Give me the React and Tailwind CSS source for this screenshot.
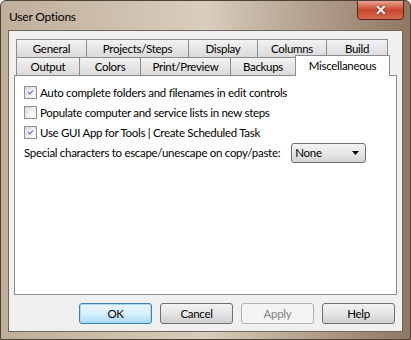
import { Check } from "lucide-react";

const row1 = [
  { label: "General", w: 71 },
  { label: "Projects/Steps", w: 103 },
  { label: "Display", w: 70 },
  { label: "Columns", w: 70 },
  { label: "Build", w: 62 },
];

const row2 = [
  { label: "Output", w: 64 },
  { label: "Colors", w: 62 },
  { label: "Print/Preview", w: 91 },
  { label: "Backups", w: 66 },
];

const options = [
  { label: "Auto complete folders and filenames in edit controls", checked: true },
  { label: "Populate computer and service lists in new steps", checked: false },
  { label: "Use GUI App for Tools | Create Scheduled Task", checked: true },
];

function Tab({ label, w }) {
  return (
    <div
      className="h-[18px] flex items-center justify-center border border-b-0 border-[#898c95] -ml-px first:ml-0 bg-gradient-to-b from-[#f2f2f2] to-[#dadada]"
      style={{ width: w }}
    >
      {label}
    </div>
  );
}

function CheckBox({ checked }) {
  return (
    <div className="w-[13px] h-[13px] border border-[#8e8f8f] bg-gradient-to-br from-[#dcdcdc] to-[#fbfbfb] p-[2px] shrink-0">
      <div className="w-full h-full bg-gradient-to-br from-[#e6e6e6] to-[#ffffff] flex items-center justify-center">
        {checked && <Check size={11} strokeWidth={3.5} className="text-[#3f5ea8]" />}
      </div>
    </div>
  );
}

function Btn({ label, primary, disabled }) {
  let cls = "border-[#707070] bg-gradient-to-b from-[#f2f2f2] via-[#e6e6e6] to-[#cfcfcf] text-black";
  if (primary) cls = "border-[#3c7fb1] bg-gradient-to-b from-[#eaf6fd] via-[#d9f0fc] to-[#a7d9f5] text-black shadow-[inset_0_0_0_1px_#a9dcf7]";
  if (disabled) cls = "border-[#adb2b5] bg-[#f4f4f4] text-[#838383]";
  return (
    <div className={"w-[73px] h-[21px] rounded-[3px] border flex items-center justify-center " + cls}>
      {label}
    </div>
  );
}

export default function App() {
  return (
    <div
      className="w-[411px] h-[340px] overflow-hidden flex flex-col px-[7px] pb-[7px] bg-gradient-to-r from-[#bfae9a] via-[#d9cdbd] to-[#8f7762] rounded-t-[6px] border border-[#4e4339] text-[11.5px] tracking-[-0.3px] text-black"
      style={{ fontFamily: "Lato, 'Noto Sans', sans-serif" }}
    >
      {/* title bar */}
      <div className="h-[29px] flex items-start justify-between shrink-0">
        <div className="pt-[7px] pl-[1px] text-[12px] tracking-[-0.2px]">User Options</div>
        <div className="w-[47px] h-[20px] -mt-px mr-[-1px] rounded-b-[4px] border border-[#5c2318] bg-gradient-to-b from-[#e8a291] via-[#c9462c] to-[#d66a4f] flex items-center justify-center">
          <span className="text-white font-bold text-[14px] leading-none [text-shadow:0_0_2px_#3a1208]">✕</span>
        </div>
      </div>

      {/* client area */}
      <div className="flex-1 bg-[#f0f0f0] border border-[#6f6558] flex flex-col px-[5px] pt-[8px]">
        {/* tabs */}
        <div className="flex pl-[2px]">
          {row1.map((t) => (
            <Tab key={t.label} {...t} />
          ))}
        </div>
        <div className="flex pl-[2px] h-[18px] items-end">
          {row2.map((t) => (
            <Tab key={t.label} {...t} />
          ))}
          <div className="w-[95px] h-[21px] shrink-0 -ml-px -mb-px flex items-start justify-center pt-[1px] bg-white border border-b-0 border-[#898c95] relative z-10">
            Miscellaneous
          </div>
        </div>

        {/* panel */}
        <div className="h-[220px] bg-white border border-[#898c95] flex flex-col pl-[9px] pt-[10px] gap-[7px]">
          {options.map((o) => (
            <div key={o.label} className="h-[13px] flex items-center gap-[3px]">
              <CheckBox checked={o.checked} />
              <span>{o.label}</span>
            </div>
          ))}
          <div className="flex items-center gap-[11px] -mt-[3px] whitespace-nowrap">
            <span>Special characters to escape/unescape on copy/paste:</span>
            <div className="w-[75px] h-[20px] rounded-[3px] border border-[#707070] bg-gradient-to-b from-[#f2f2f2] via-[#e8e8e8] to-[#d3d3d3] flex items-center justify-between pl-[3px] pr-[6px]">
              <span>None</span>
              <svg width="7" height="4" viewBox="0 0 7 4">
                <path d="M0 0h7L3.5 4z" fill="#000" />
              </svg>
            </div>
          </div>
        </div>

        {/* buttons */}
        <div className="flex justify-end gap-[8px] pr-[2px] mt-[8px]">
          <Btn label="OK" primary />
          <Btn label="Cancel" />
          <Btn label="Apply" disabled />
          <Btn label="Help" />
        </div>
      </div>
    </div>
  );
}
